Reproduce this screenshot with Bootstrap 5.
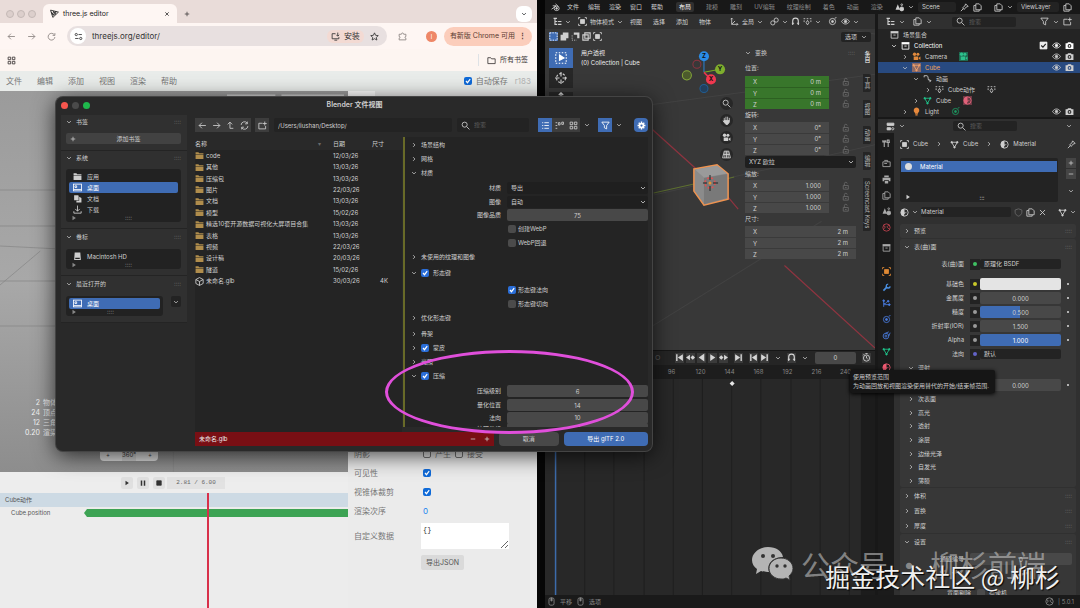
<!DOCTYPE html>
<html lang="zh-CN">
<head>
<meta charset="utf-8">
<meta name="viewport" content="width=device-width, initial-scale=1">
<title>three.js editor / Blender</title>
<link href="https://cdn.jsdelivr.net/npm/bootstrap@5.3.0/dist/css/bootstrap.min.css" rel="stylesheet">
<style>
body{font-family:Inter,"Noto Sans CJK SC",sans-serif;font-size:6px;line-height:10px;background:#060606;color:#cfcfcf}
svg.ic{width:9px;height:9px;fill:none;stroke:currentColor;stroke-width:1.5;flex:none;display:block}
svg.lg{width:12px;height:12px}
svg.sm{width:6px;height:6px;stroke-width:2}
.solid{fill:currentColor}
button,input,select,textarea{font:inherit;color:inherit;border:0;padding:0;margin:0;background:none;min-width:0;border-radius:0}
::placeholder{color:#5c5c5c!important}
a{color:inherit;text-decoration:none}
label{display:inline-block}
.desk{height:100vh;position:relative}
/* browser */
.chrome{flex:0 0 50%;padding-right:3px;color:#3c3838;font-size:8px;line-height:12px}
.strip{height:23px;background:#e9dcd9;padding:4px 5px 0 6px;gap:3px}
.tl{width:8px;height:8px;border-radius:50%;border:1px solid #c4b9b6;background:#dccfcc}
.tabx{background:#fef6f3;height:19px;width:134px;border-radius:6px 6px 0 0;margin-left:4px;padding:0 7px;font-size:7px;color:#222}
.round{width:16px;height:16px;border-radius:6px;background:#fff}
.bar{height:26px;background:#fef6f3;padding:0 5px 0 7px;gap:11px;color:#8a8280}
.omni{background:#e8e0e0;border-radius:10px;height:20px;color:#333;padding:0 8px 0 3px;gap:6px}
.inst{background:#f3dad3;border-radius:6px;height:13px;padding:0 4px}
.upd{background:#fbcdbb;border-radius:10px;height:19px;padding:0 6px;color:#5a3a30;font-size:7px}
.marks{height:22px;background:#fdf5f1;padding:0 9px 0 7px;font-size:7px}
.emenu{height:20px;background:#e9ecea;padding:0 6px;gap:15px;color:#777}
.ck{appearance:none;width:8px;height:8px;border-radius:2px;background:#4b4b4b;flex:none}
.ck:checked{background:#2a6ed8 url("data:image/svg+xml,%3Csvg xmlns='http://www.w3.org/2000/svg' viewBox='0 0 8 8'%3E%3Cpath d='M2 4l1.5 1.7L6.2 2.2' fill='none' stroke='%23fff' stroke-width='1.2'/%3E%3C/svg%3E")}
.ck.line{background:#eee;border:1px solid #777}
.ck.blue:checked{background-color:#0f6ad8}
.scene{flex:1 1 345px;background:linear-gradient(#9b9b9b,#a8a8a8 50%,#8d8d8d)}
.stats{font-size:7px;line-height:10px;color:#f4f4f4;width:80px}
.stats span{width:40px;text-align:right;margin-right:3px}
.play{background:#ededed;height:21px;padding-left:121px;gap:4px;color:#333}
.play button{width:12px;height:12px;background:#e0e0e0;border-radius:2px}
.play .time{background:#e2e2e2;width:58px;height:12px;font:6px/12px "Liberation Mono",monospace;color:#666;text-align:center;margin-left:-2px}
.tracks{background:#ececec;font-size:6px;color:#555;position:relative}
.tracks .clip{height:14px;background:#cddae4;padding:0 5px}
.keys{height:8px;background:#3da354;clip-path:polygon(0 50%,3px 0,100% 0,100% 100%,3px 100%)}
.head{position:absolute;top:0;bottom:0;left:207px;width:2px;background:#d8304a}
.side{flex:0 0 189px;background:#ebebeb;color:#777}
.side .prop{height:19px;padding-left:6px}
.side .prop>.nm{width:69px}
.ta{width:88px;height:26px;background:#fff;font:7px/10px "Liberation Mono",monospace;color:#333;padding:2px;resize:both;vertical-align:top}
.exp{background:#dadada;height:15px;padding:0 5px;border-radius:2px;color:#555;font-size:7px}
/* blender */
.blend{background:#161616;margin-left:5px;min-width:0}
.topm{height:14px;background:#181818;padding-left:6px;overflow:hidden}
.topm a{white-space:nowrap;flex:none}
.dim a{color:#8c8c8c}
.wtab{background:#303030;border-radius:2px;padding:0 3px;color:#fff!important}
.box{background:#232323;border-radius:2px}
.hd{height:15px;background:#303030;white-space:nowrap}
.view{background:#383838;position:relative;flex:0 0 336px;overflow:hidden}
.view .world{position:absolute;inset:0;width:100%;height:100%}
.lay{position:relative}
.view .hd{gap:3px}
.tb{width:24px;height:20px;background:#272727}
.tb.on,.on{background:#3f6cb4!important;color:#fff}
.fld{background:#484848;height:11px;padding:0 8px;gap:4px}
.fld input{width:100%;text-align:right}
.fld+.fld{border-top:1px solid #3a3a3a}
.grn .fld{background:#38762b}.grn .fld+.fld{border-color:#2c6021}
.w84{width:84px}.npan{width:118px;line-height:12px}
.vtab{writing-mode:vertical-rl;background:#252525;color:#b5b5b5;width:8px;border-radius:0 2px 2px 0;padding:3px 0;line-height:8px}
.rnd{width:13px;height:13px;border-radius:50%;background:#272727}
.num{height:12px;background:#484848;text-align:center;border-radius:2px;width:100%}
.sel{appearance:none;height:12px;border-radius:2px;padding:0 4px;width:100%;background:#1f1f1f url("data:image/svg+xml,%3Csvg xmlns='http://www.w3.org/2000/svg' viewBox='0 0 8 8'%3E%3Cpath d='M2 3l2 2 2-2' fill='none' stroke='%23bbb' stroke-width='.9'/%3E%3C/svg%3E") no-repeat right 1px center/8px 8px}
.tlh{height:14px;background:#252525;color:#d5d5d5}
.tlh button{height:10px;background:#3a3a3a}
.ruler{height:14px;background:#1d1d1d;color:#858585;overflow:hidden;padding-left:112px}
.ruler span{width:29px;text-align:center;flex:none}
.dope{background:#282828}
.right{flex:0 0 205px;min-width:0;background:#181818;padding-left:3px}
.outl{height:104px;background:#242424;overflow:hidden}
.outl .it{height:11px;gap:4px;padding-right:6px}
.outl ul,.plain{list-style:none;margin:0;padding:0}
.ptabs{width:16px;background:#1b1b1b;color:#aaa;padding-top:6px;gap:7px}
.props{background:#303030;padding:0 4px 0 6px;overflow:hidden;min-width:0}
.pnl{background:#373737;border-radius:2px;padding:0 4px;margin-bottom:1px}
.r14{height:14px}.r15{height:15px}
.pr{height:14px;gap:6px}
.pr>label,.pr>.lb{width:60px;text-align:right;white-space:nowrap;flex:none}
.sock{width:10px;height:11px;background:#232323;flex:none;margin-right:-6px}
.sock i{width:4px;height:4px;border-radius:50%;background:#9a9a9a}
.dot{width:2px;height:2px;border-radius:50%;background:#ddd;flex:none;margin-right:3px}
.fade2{color:#6a6a6a}
.stat{height:13px;background:#1a1a1a;color:#888;padding:0 6px 0 2px}
/* file dialog */
.dlg{position:absolute;left:56px;top:97px;width:596px;height:354px;background:#292929;border-radius:7px;box-shadow:0 0 0 1px #444,0 4px 22px rgba(0,0,0,.75);overflow:hidden;padding:0 4px 5px 5px}
.ttl{height:16px;font-size:7px;font-weight:600}
.ttl i{width:7px;height:7px;border-radius:50%}
.lside{width:126px;margin-top:2px}
.lp{background:#303030;padding:0 6px 6px 5px;border-bottom:1px solid #242424}
.lp .h{height:14px;gap:4px}
.lst{background:#222;border-radius:3px;padding:2px 3px 0}
.lst a{height:11px;padding-left:4px;gap:5px;border-radius:2px}
.lst .ft{height:7px;padding:0 46px 0 2px;color:#888;line-height:6px}
.grp button{background:#3d3d3d;width:14px;height:14px}
.files{width:100%;height:137px;color:#d2d2d2}
.files td{padding:0;line-height:10px}
.ho{height:14px;gap:4px;padding-left:6px}
.opt .pr>label{width:96px}
.opt .ind{padding-left:103px;gap:2px;height:14px}
.fold{color:#b08d4c}
.ring{position:absolute;left:385px;top:350px;width:249px;height:84px;border:3px solid #e04fdb;border-radius:50%}
.tip{position:absolute;left:850px;top:370px;background:#161616;border-radius:2px;padding:2px 6px 2px 3px;line-height:9px;height:23px;color:#ccc;box-shadow:0 1px 4px #000}
.wm{position:absolute;right:34px;bottom:22px;font:29px/44px "Noto Sans CJK SC",sans-serif;color:rgba(190,190,190,.62);white-space:nowrap}
.wm2{position:absolute;right:20px;bottom:14px;font:25px/36px "Noto Sans CJK SC",sans-serif;color:#efefef;text-shadow:1px 1px 1px #000;white-space:nowrap}
</style>
</head>
<body>
<svg width="0" height="0" class="position-absolute" viewBox="0 0 16 16">
<symbol id="dn" viewBox="0 0 16 16"><path d="M3 5.5l5 5 5-5"/></symbol>
<symbol id="rt" viewBox="0 0 16 16"><path d="M5.500 3l5 5-5 5"/></symbol>
<symbol id="al" viewBox="0 0 16 16"><path d="M14 8H2m5-5L2 8l5 5"/></symbol>
<symbol id="ar" viewBox="0 0 16 16"><path d="M2 8h12M9 3l5 5-5 5"/></symbol>
<symbol id="up" viewBox="0 0 16 16"><path d="M3 6l4-4 4 4M7 2v11h6"/></symbol>
<symbol id="ax" viewBox="0 0 16 16"><path d="M3 2v11h11M3 13l6-6M1 4l2-2 2 2M12 11l2 2-2 2"/></symbol>
<symbol id="ln" viewBox="0 0 16 16"><circle cx="5" cy="10.500" r="3.700"/><circle cx="11" cy="5.500" r="3.700"/></symbol>
<symbol id="rl" viewBox="0 0 16 16"><path d="M13 5a6 6 0 1 0 1 4M14 2v4h-4"/></symbol>
<symbol id="rf" viewBox="0 0 16 16"><path d="M2 7a6 6 0 0 1 11-3M14 9a6 6 0 0 1-11 3M13 1v4H9M3 15v-4h4"/></symbol>
<symbol id="x" viewBox="0 0 16 16"><path d="M3.500 3.500l9 9m0-9l-9 9"/></symbol>
<symbol id="pl" viewBox="0 0 16 16"><path d="M8 2v12M2 8h12"/></symbol>
<symbol id="mn" viewBox="0 0 16 16"><path d="M2 8h12"/></symbol>
<symbol id="se" viewBox="0 0 16 16"><circle cx="6.500" cy="6.500" r="4.500"/><path d="M10 10l5 5"/></symbol>
<symbol id="sl" viewBox="0 0 16 16"><circle cx="4" cy="4.500" r="2"/><path d="M8 4.500h6M2 11.500h6"/><circle cx="12" cy="11.500" r="2"/></symbol>
<symbol id="ins" viewBox="0 0 16 16"><path d="M8 3H2v9h12v-3M6 14.500h5M12 1v6m-2.500-2L12 7.500 14.500 5"/></symbol>
<symbol id="st" viewBox="0 0 16 16"><path d="M8 1.500l2 4.400 4.700.5-3.500 3.200 1 4.700L8 11.900l-4.200 2.400 1-4.700L1.300 6.400 6 5.900z"/></symbol>
<symbol id="pz" viewBox="0 0 16 16"><path d="M2 4h4c0-3 4-3 4 0h4v4c-2-.5-2 3.500 0 3v3H2v-3c2 .5 2-3.500 0-3z"/></symbol>
<symbol id="g4" viewBox="0 0 16 16"><path d="M2 2h4.500v4.500H2zM9.500 2H14v4.500H9.500zM2 9.500h4.500V14H2zM9.500 9.500H14V14H9.500z"/></symbol>
<symbol id="fo" viewBox="0 0 16 16"><path d="M1.500 3h5l1.500 2h6.500v8.500h-13z"/></symbol>
<symbol id="ff" viewBox="0 0 16 16"><path fill="currentColor" stroke="none" d="M1 2h5l1.500 2H15v2H1zM1 7h14v7H1z"/></symbol>
<symbol id="nf" viewBox="0 0 16 16"><path d="M8 4H1.500v10h12V9"/><path d="M12 1v7M8.500 4.500h7"/></symbol>
<symbol id="th" viewBox="0 0 16 16"><path d="M1 2l14 3.500L5 15zM5.500 3.200L10 10M3 8.500l7.500-4M4 10l5-1 2-5M2 5l5 7"/></symbol>
<symbol id="dk" viewBox="0 0 16 16"><rect x="1" y="2" width="14" height="12"/><path d="M1 11.500h14M3.500 5h3v3h-3z"/></symbol>
<symbol id="dc" viewBox="0 0 16 16"><path fill="currentColor" stroke="none" d="M2 2h7l1 1v8H2zM11 5l4 2v8H6v-3h5z"/></symbol>
<symbol id="dl" viewBox="0 0 16 16"><path d="M8 1v10M4 7l4 4 4-4M1.500 11v3.500h13V11"/></symbol>
<symbol id="hd" viewBox="0 0 16 16"><path fill="currentColor" stroke="none" fill-rule="evenodd" d="M3 1h10l1 13H2zM4 10v2.500h8V10z"/></symbol>
<symbol id="mo" viewBox="0 0 16 16"><rect x="3.500" y="1.500" width="9" height="13" rx="3"/><path fill="currentColor" d="M7 2h2v5H7z"/></symbol>
<symbol id="cu" viewBox="0 0 16 16"><path d="M8 1l6.500 3.500v7L8 15l-6.500-3.500v-7zM1.500 4.500L8 8l6.500-3.500M8 8v7"/></symbol>
<symbol id="li" viewBox="0 0 16 16"><path d="M2 3h2M6 3h8M2 8h2M6 8h8M2 13h2M6 13h8"/></symbol>
<symbol id="fi" viewBox="0 0 16 16"><path d="M1.500 2h13L10 8v6l-4-2V8z"/></symbol>
<symbol id="ge" viewBox="0 0 16 16"><circle cx="8" cy="8" r="3.500" stroke-width="3"/><path d="M8 1v3M8 12v3M1 8h3M12 8h3M3 3l2 2M11 11l2 2M13 3l-2 2M5 11l-2 2" stroke-width="2.500"/></symbol>
<symbol id="ey" viewBox="0 0 16 16"><path d="M1 8c3.500-6 10.500-6 14 0-3.500 6-10.500 6-14 0z"/><circle cx="8" cy="8" r="2.200" fill="currentColor"/></symbol>
<symbol id="ca" viewBox="0 0 16 16"><path fill="currentColor" fill-rule="evenodd" stroke="none" d="M1 4h3l1.500-2h5L12 4h3v10H1zM8 5.500a3.300 3.300 0 1 0 0 6.600 3.300 3.300 0 0 0 0-6.600zM8 7.300a1.500 1.500 0 1 1 0 3 1.500 1.500 0 0 1 0-3z"/></symbol>
<symbol id="co2" viewBox="0 0 16 16"><path d="M1.500 5h13v8.500h-13zM4 2.500h6V5M4 8h5"/></symbol>
<symbol id="mv" viewBox="0 0 16 16"><g fill="currentColor" stroke="none"><circle cx="4.500" cy="4" r="3"/><circle cx="10.500" cy="4" r="2.700"/><path d="M3 8h8v6H3zM12 10l3-2v6l-3-2z"/></g></symbol>
<symbol id="tr" viewBox="0 0 16 16"><path d="M3 4h10L8 13z"/><g fill="currentColor"><circle cx="3" cy="4" r="1.300"/><circle cx="13" cy="4" r="1.300"/><circle cx="8" cy="13" r="1.300"/></g></symbol>
<symbol id="ac" viewBox="0 0 16 16"><path d="M2 3h5c4 0 0 9 5 9h2M11.500 9.500L14 12l-2.500 2.500M2 3v3"/></symbol>
<symbol id="kf" viewBox="0 0 16 16"><path d="M1 3h3M6.500 3h3M12 3h3M2 6v3M14 6v3M8 6l2.500 4L8 14l-2.500-4z"/></symbol>
<symbol id="bu" viewBox="0 0 16 16"><path fill="currentColor" stroke="none" d="M8 1a5 5 0 0 1 3 9l-.5 2h-5L5 10a5 5 0 0 1 3-9zM6 13h4v2H6z"/></symbol>
<symbol id="ob" viewBox="0 0 16 16"><path d="M1 4V1h3M12 1h3v3M15 12v3h-3M4 15H1v-3"/><path fill="currentColor" d="M4.500 4.500h7v7h-7z"/></symbol>
<symbol id="ma" viewBox="0 0 16 16"><circle cx="8" cy="8" r="6.500"/><path fill="currentColor" stroke="none" d="M8 1.500a6.500 6.500 0 0 0 0 13c-2-4 1-5.500 5-6.500V8H8z"/></symbol>
<symbol id="co" viewBox="0 0 16 16"><path d="M5 1.500h6l3.500 3.500v7H5zM5 4.500H1.500v10H11V12"/></symbol>
<symbol id="pi" viewBox="0 0 16 16"><path d="M10 1.500l4.500 4.500-4 1.500-3 4-3-3 4-3zM6 10l-4.500 4.500"/></symbol>
<symbol id="ar2" viewBox="0 0 16 16"><path fill="currentColor" stroke="none" d="M1 2h14v4H1z"/><path d="M2 6v8.500h12V6M6 9h4"/></symbol>
<symbol id="lk" viewBox="0 0 16 16"><path d="M4 8h9v6.500H4zM6 8V4.500c0-3 5-3 5 0M7 11.500h3"/></symbol>
<symbol id="tw" viewBox="0 0 16 16"><path d="M4 2v12M1.500 2v3h5V2M11 14V6M9.500 2h3l.5 4h-4z" stroke-width="2"/></symbol>
<symbol id="sc" viewBox="0 0 16 16"><path fill="currentColor" stroke="none" d="M5 2l4 10H1z"/><circle cx="12" cy="10.500" r="3.500" fill="currentColor"/><circle cx="12" cy="3" r="1.500"/></symbol>
<symbol id="pn" viewBox="0 0 16 16"><path fill="currentColor" stroke="none" d="M4 1h8v3H4zM1 5h14v6h-3V9H4v2H1zM5 10h6v5H5z"/></symbol>
<symbol id="wr" viewBox="0 0 16 16"><path stroke-width="3" d="M2.500 13.500L9 7"/><path stroke-width="2.500" d="M11 2a3.500 3.500 0 1 0 3.500 4"/></symbol>
<symbol id="ph" viewBox="0 0 16 16"><circle cx="8" cy="8" r="5.500"/><circle cx="8" cy="8" r="1.800" fill="currentColor"/><path d="M12 2l3-1"/></symbol>
<symbol id="pt" viewBox="0 0 16 16"><path d="M3 14V3M3 8c4 0 4 0 7-4M3 10h10"/><g fill="currentColor"><circle cx="3" cy="3" r="1.500"/><circle cx="11" cy="4" r="1.500"/><circle cx="13" cy="10" r="1.500"/></g></symbol>
<symbol id="cn" viewBox="0 0 16 16"><circle cx="7" cy="9" r="5"/><circle cx="7" cy="9" r="1.800"/><path d="M6 4l6-2.500M12 9l2.500-6"/></symbol>
<symbol id="wo" viewBox="0 0 16 16"><circle cx="8" cy="8" r="6.500"/><path d="M3 4c3 2 3 4 1 6M13 4c-3 1-6 3-2 5l2 2"/></symbol>
<symbol id="he" viewBox="0 0 16 16"><path d="M8 1.500l6 2v4c0 3.500-3 6-6 7-3-1-6-3.500-6-7v-4z"/></symbol>
<symbol id="bl" viewBox="0 0 16 16"><path d="M1 11L9 5H3M8 1.500l5 4.500"/><ellipse cx="10" cy="9.500" rx="4.500" ry="4"/><circle cx="10" cy="9.500" r="1.500" fill="currentColor"/></symbol>
<symbol id="tre" viewBox="0 0 16 16"><path d="M1 2.500h6M3.500 3v10h4M3.500 8h4M9 8h6M9 13h6" stroke-width="2"/></symbol>
<symbol id="pe" viewBox="0 0 16 16"><path fill="currentColor" d="M2 2h12v4H2zM2 10h6v4H2z"/><circle cx="12" cy="12" r="2"/></symbol>
<symbol id="mg" viewBox="0 0 16 16"><path d="M3 14V7a5 5 0 0 1 10 0v7M1.500 11h4M10.500 11h4" stroke-width="2"/></symbol>
<symbol id="sq" viewBox="0 0 16 16"><path fill="currentColor" stroke="none" d="M1 5h4V1h10v10h-4v4H1z"/></symbol>
<symbol id="sq2" viewBox="0 0 16 16"><path fill="currentColor" stroke="none" d="M5 1h10v10h-4V5H5z"/><path stroke-dasharray="2 2" d="M2 6v8.500h8"/></symbol>
<symbol id="sq3" viewBox="0 0 16 16"><path d="M5 1.500h9.500V11H5zM1.500 5H11v9.500H1.500z" stroke-width="2"/></symbol>
<symbol id="da" viewBox="0 0 16 16"><rect x="1.500" y="1.500" width="13" height="13" stroke-dasharray="2.500 2"/></symbol>
<symbol id="pp" viewBox="0 0 16 16"><path fill="currentColor" stroke="none" d="M4 2l9 6-9 6z"/></symbol>
<symbol id="pb" viewBox="0 0 16 16"><path fill="currentColor" stroke="none" d="M13 1L3 8l10 7z"/></symbol>
<symbol id="js" viewBox="0 0 16 16"><path fill="currentColor" stroke="none" d="M2 2h2.500v12H2zM14 2L5 8l9 6z"/></symbol>
<symbol id="je" viewBox="0 0 16 16"><path fill="currentColor" stroke="none" d="M14 2h-2.500v12H14zM2 2l9 6-9 6z"/></symbol>
<symbol id="kp" viewBox="0 0 16 16"><path fill="currentColor" stroke="none" d="M7 3L0 8l7 5zM12 4l4 4-4 4-4-4z"/></symbol>
<symbol id="kn" viewBox="0 0 16 16"><path fill="currentColor" stroke="none" d="M9 3l7 5-7 5zM4 4l4 4-4 4-4-4z"/></symbol>
<symbol id="ck" viewBox="0 0 16 16"><circle cx="8" cy="9" r="5.500"/><path d="M8 5.500V9l2 1.500M6 1h4M2 4l2-2"/></symbol>
</svg>

<main class="desk d-flex overflow-hidden">
<!-- Browser window -->
<section class="chrome d-flex flex-column">
  <div class="strip d-flex align-items-center">
    <span class="tl"></span><span class="tl"></span><span class="tl"></span>
    <div class="tabx d-flex align-items-center gap-1"><svg class="ic"><use href="#th"/></svg><span>three.js editor</span><svg class="ic sm ms-auto"><use href="#x"/></svg></div>
    <button class="ms-1" aria-label="新标签页"><svg class="ic sm"><use href="#pl"/></svg></button>
    <button class="round ms-auto d-flex align-items-center justify-content-center text-dark" aria-label="搜索标签页"><svg class="ic sm"><use href="#dn"/></svg></button>
  </div>
  <div class="bar d-flex align-items-center">
    <svg class="ic"><use href="#al"/></svg><svg class="ic"><use href="#ar"/></svg><svg class="ic"><use href="#rl"/></svg>
    <div class="omni d-flex align-items-center flex-grow-1"><span class="round rounded-circle d-flex align-items-center justify-content-center"><svg class="ic"><use href="#sl"/></svg></span><input class="flex-grow-1" value="threejs.org/editor/" aria-label="地址栏">
      <button class="inst d-flex align-items-center gap-1"><svg class="ic"><use href="#ins"/></svg>安装</button><svg class="ic"><use href="#st"/></svg></div>
    <svg class="ic"><use href="#pz"/></svg>
    <span class="rounded-circle text-white text-center ms-2" style="width:11px;height:11px;background:#ee8767;font-size:6px">l</span>
    <button class="upd d-flex align-items-center gap-1 text-nowrap" style="margin-left:-4px">有新版 Chrome 可用 <b>⋮</b></button>
  </div>
  <div class="marks d-flex align-items-center"><svg class="ic"><use href="#g4"/></svg><span class="ms-auto border-start ps-2 d-flex align-items-center gap-1"><svg class="ic"><use href="#fo"/></svg>所有书签</span></div>
  <nav class="emenu d-flex align-items-center"><a href="#">文件</a><a href="#">编辑</a><a href="#">添加</a><a href="#">视图</a><a href="#">渲染</a><a href="#">帮助</a>
    <label class="ms-auto d-flex align-items-center gap-1"><input type="checkbox" class="ck blue" checked>自动保存</label><span style="margin-left:-8px;color:#b5b5b5">r183</span></nav>
  <div class="d-flex flex-grow-1">
    <div class="d-flex flex-column flex-grow-1">
      <div class="scene d-flex flex-column justify-content-end overflow-hidden position-relative">
        <svg class="position-absolute top-0 start-0 w-100 h-100" preserveAspectRatio="none" viewBox="0 0 345 381" fill="none" stroke="#858585" stroke-width=".7"><path d="M0 99H56M0 135H56M0 155L60 158M0 194l40-34M0 190H60M0 235H60M172 340v41"/><path stroke="#cfcfcf" stroke-width="5" d="M225 6h48M279 6h62"/></svg>
        <div class="stats lay"><div class="d-flex"><span>2</span>物体</div><div class="d-flex"><span>24</span>顶点</div><div class="d-flex"><span>12</span>三角形</div><div class="d-flex"><span>0.20</span>渲染</div></div>
        <div class="lay rounded-1 d-flex justify-content-around align-items-end" style="background:#ddd;width:58px;height:20px;margin:3px 0 11px 100px;font-size:6px"><span>+</span><span style="background:#ccc">360°</span><span>+</span></div>
      </div>
      <div class="play d-flex align-items-center"><button class="d-flex align-items-center justify-content-center" aria-label="播放"><svg class="ic sm"><use href="#pp"/></svg></button><button class="d-flex align-items-center justify-content-center" aria-label="暂停"><svg class="ic sm" viewBox="0 0 16 16"><path stroke-width="4" d="M4 1v14M12 1v14"/></svg></button><button class="d-flex align-items-center justify-content-center" aria-label="停止"><svg class="ic sm" viewBox="0 0 16 16"><path class="solid" d="M2 2h12v12H2z"/></svg></button><span class="time">2.81 / 6.00</span></div>
      <div class="tracks" style="height:115px"><div class="clip d-flex align-items-center">Cube动作</div><div class="d-flex align-items-center" style="height:12px;padding-left:11px"><span style="width:73px">Cube.position</span><div class="keys flex-grow-1"></div></div><div class="head"></div></div>
    </div>
    <aside class="side d-flex flex-column">
      <div style="height:16px;width:27px;background:#fff"></div>
      <div class="mt-auto" style="padding-bottom:38px">
        <div class="prop d-flex align-items-center"><span class="nm">阴影</span><label class="d-flex align-items-center gap-1"><input type="checkbox" class="ck line">产生</label><label class="d-flex align-items-center gap-1 ms-1"><input type="checkbox" class="ck line">接受</label></div>
        <div class="prop d-flex align-items-center"><label class="nm" for="vis">可见性</label><input id="vis" type="checkbox" class="ck blue" checked></div>
        <div class="prop d-flex align-items-center"><label class="nm" for="fru">视锥体裁剪</label><input id="fru" type="checkbox" class="ck blue" checked></div>
        <div class="prop d-flex align-items-center"><label class="nm" for="ord">渲染次序</label><input id="ord" value="0" style="color:#1b84f0;width:40px"></div>
        <div class="prop d-flex align-items-center" style="height:32px"><label class="nm" for="ud" style="width:67px">自定义数据</label><textarea id="ud" class="ta">{}</textarea></div>
        <div class="d-flex" style="padding:3px 0 0 73px"><button class="exp">导出JSON</button></div>
      </div>
    </aside>
  </div>
</section>

<!-- Blender main window -->
<section class="blend flex-grow-1 d-flex flex-column overflow-hidden">
  <div class="d-flex">
    <nav class="topm d-flex align-items-center flex-grow-1" style="flex-basis:0;gap:9px"><svg class="ic" style="margin-right:-2px"><use href="#bl"/></svg><a href="#">文件</a><a href="#">编辑</a><a href="#">渲染</a><a href="#">窗口</a><a href="#">帮助</a>
      <span class="dim d-flex align-items-center ms-1" style="gap:12px"><a href="#" class="wtab">布局</a><a href="#">建模</a><a href="#">雕刻</a><a href="#">UV编辑</a><a href="#">纹理绘制</a><a href="#">着色</a><a href="#">动画</a><a href="#">渲染</a></span></nav>
    <div class="topm d-flex align-items-center gap-1 p-0" style="width:185px"><svg class="ic"><use href="#sc"/></svg><svg class="ic sm"><use href="#dn"/></svg><input class="box px-1" style="width:38px" value="Scene" aria-label="场景"><svg class="ic"><use href="#pi"/></svg><svg class="ic"><use href="#co"/></svg><svg class="ic ms-2"><use href="#co"/></svg><svg class="ic sm"><use href="#dn"/></svg><input class="box px-1" style="width:42px" value="ViewLayer" aria-label="视图层"><svg class="ic"><use href="#co"/></svg></div>
  </div>
  <div class="d-flex flex-grow-1 overflow-hidden">
    <div class="flex-grow-1 d-flex flex-column" style="min-width:0">
      <!-- 3D viewport -->
      <div class="view d-flex flex-column">
        <svg class="world" viewBox="0 0 328 336" preserveAspectRatio="xMinYMin slice" fill="none">
          <path stroke="#424242" d="M107 310L275 206M108 180L328 130M107 90L328 60M200 0L328 20"/><path stroke="#8f3440" d="M107 115L157 160M182 182L192 194M238 250L328 332" stroke-width="1.200"/><path stroke="#5e7031" d="M108 178L148 169M180 164L188 162"/>
          <g stroke="#ef9350" stroke-width="1.500"><path fill="#8b8b8b" d="M148 154l23-4 11 9v25l-24 6-10-14z"/></g><path fill="#9a9a9a" d="M149 154.500l22-4 10 8-23 4z"/><path fill="#797979" d="M158 163l23-4v24l-23 6z"/>
          <circle cx="164" cy="168" r="5" stroke="#e05050" stroke-width="1.500" stroke-dasharray="2 2"/><path stroke="#222" d="M157 168h4M167 168h5M164 160v5M164 171v5"/><circle cx="164" cy="168" r="1.500" fill="#f09030"/>
          <path stroke="#2a82d6" d="M158 42v16"/><path stroke="#7bab24" d="M158 58l16-3"/><path stroke="#e8354f" stroke-width="1.500" d="M158 58l7 7"/>
          <circle cx="158" cy="42" r="5" fill="#2a8be6"/><circle cx="174" cy="55" r="5" fill="#7fae2d"/><circle cx="165" cy="65" r="5" fill="#f0384f"/><circle cx="151" cy="50" r="4" stroke="#8c3440"/><circle cx="141" cy="61" r="4.500" stroke="#86a83a" fill="#4c5b2c"/><circle cx="158" cy="74" r="4" stroke="#225d92" fill="#22405d"/>
          <g fill="#111" font-size="6" font-weight="700" text-anchor="middle"><text x="158" y="44">Z</text><text x="174" y="57">Y</text><text x="165" y="67">X</text></g>
        </svg>
        <div class="hd lay d-flex align-items-center ps-2"><svg class="ic"><use href="#tre"/></svg><svg class="ic sm"><use href="#dn"/></svg><svg class="ic ms-1"><use href="#ob"/></svg><span>物体模式</span><svg class="ic sm"><use href="#dn"/></svg>
          <a class="mx-1" href="#">视图</a><a class="mx-1" href="#">选择</a><a class="mx-1" href="#">添加</a><a class="ms-1" href="#">物体</a><svg class="ic ms-3"><use href="#ax"/></svg>全局<svg class="ic sm"><use href="#dn"/></svg><svg class="ic ms-1"><use href="#ln"/></svg><svg class="ic sm"><use href="#dn"/></svg><svg class="ic"><use href="#mg"/></svg><svg class="ic"><use href="#kf"/></svg><svg class="ic sm"><use href="#dn"/></svg><svg class="ic ms-1"><use href="#ph"/></svg><svg class="ic ms-auto"><use href="#ey"/></svg><svg class="ic sm me-3"><use href="#dn"/></svg></div>
        <div class="lay d-flex align-items-center ps-1" style="height:15px;gap:2px"><svg class="ic on"><use href="#da"/></svg><svg class="ic"><use href="#sq"/></svg><svg class="ic"><use href="#sq2"/></svg><svg class="ic"><use href="#sq3"/></svg><svg class="ic"><use href="#ob"/></svg><span class="box ms-auto px-1 me-1 d-flex align-items-center gap-1">选项 <svg class="ic sm"><use href="#dn"/></svg></span></div>
        <div class="lay d-flex flex-grow-1">
          <div class="pt-1 ps-1"><button class="tb on d-flex align-items-center justify-content-center" aria-label="框选"><svg class="ic lg" viewBox="0 0 16 16"><rect x="1" y="1" width="14" height="14" stroke-dasharray="2"/><path class="solid" d="M6 4l6 4-6 3z"/></svg></button><button class="tb d-flex align-items-center justify-content-center" aria-label="游标"><svg class="ic lg" viewBox="0 0 16 16"><circle cx="8" cy="8" r="6" stroke-dasharray="3 2"/><path d="M8 0v6M8 10v6M0 8h6M10 8h6"/></svg></button><button class="tb mt-1 d-flex justify-content-center" aria-label="移动"><svg class="ic lg" viewBox="0 0 16 16"><path d="M8 1v14M1 8h14M5 4l3-3 3 3"/></svg></button></div>
          <div class="ps-2 pt-1 flex-grow-1" style="color:#eee">用户透视<br>(0) Collection | Cube</div>
          <div class="d-flex flex-column gap-1 me-2 pe-1" style="padding-top:53px"><span class="rnd d-flex align-items-center justify-content-center"><svg class="ic"><use href="#se"/></svg></span><span class="rnd d-flex align-items-center justify-content-center"><svg class="ic" viewBox="0 0 16 16"><path class="solid" stroke-linecap="round" d="M4 8V4M7 7V2M10 7V2M13 8V4M4 8h9v3l-3 4H7L2 9"/></svg></span><span class="rnd d-flex align-items-center justify-content-center"><svg class="ic"><use href="#mv"/></svg></span><span class="rnd d-flex align-items-center justify-content-center"><svg class="ic" viewBox="0 0 16 16"><path d="M4 2h8l3 12H1zM2.500 8h11M8 2v12M5.500 2L5 14M10.500 2l.5 12"/></svg></span></div>
          <div class="npan">
            <div class="d-flex align-items-center gap-1 pe-2" style="height:18px"><svg class="ic sm"><use href="#dn"/></svg>变换<span class="ms-auto fade2">::::</span></div>
            <div class="r14">位置:</div>
            <div class="d-flex"><div class="grn w84"><label class="fld d-flex">X<input value="0 m"></label><label class="fld d-flex">Y<input value="0 m"></label><label class="fld d-flex">Z<input value="0 m"></label></div><div class="ms-2 ps-1 d-flex flex-column justify-content-around fade2"><svg class="ic"><use href="#lk"/></svg><svg class="ic"><use href="#lk"/></svg><svg class="ic"><use href="#lk"/></svg></div></div>
            <div style="height:13px">旋转:</div>
            <div class="d-flex"><div class="w84"><label class="fld d-flex">X<input value="0°"></label><label class="fld d-flex">Y<input value="0°"></label><label class="fld d-flex">Z<input value="0°"></label></div><div class="ms-2 ps-1 d-flex flex-column justify-content-around fade2"><svg class="ic"><use href="#lk"/></svg><svg class="ic"><use href="#lk"/></svg><svg class="ic"><use href="#lk"/></svg></div></div>
            <select class="sel d-block" style="width:111px;margin-top:1px" aria-label="旋转模式"><option>XYZ 欧拉</option></select>
            <div style="height:12px">缩放:</div>
            <div class="d-flex"><div class="w84"><label class="fld d-flex">X<input value="1.000"></label><label class="fld d-flex">Y<input value="1.000"></label><label class="fld d-flex">Z<input value="1.000"></label></div><div class="ms-2 ps-1 d-flex flex-column justify-content-around fade2"><svg class="ic"><use href="#lk"/></svg><svg class="ic"><use href="#lk"/></svg><svg class="ic"><use href="#lk"/></svg></div></div>
            <div style="height:13px">尺寸:</div>
            <div style="width:111px"><label class="fld d-flex">X<input value="2 m"></label><label class="fld d-flex">Y<input value="2 m"></label><label class="fld d-flex">Z<input value="2 m"></label></div>
          </div>
          <div class="d-flex flex-column gap-2 pe-1 pt-1"><span class="vtab" style="background:#383838;color:#fff">条目</span><span class="vtab">工具</span><span class="vtab">视图</span><span class="vtab">动画</span><span class="vtab">编辑</span><span class="vtab">Screencast Keys</span></div>
        </div>
      </div>
      <!-- Timeline -->
      <div class="tlh d-flex align-items-center" style="margin-top:1px;padding-left:110px;gap:2px"><span class="fade2" style="width:18px">○</span><button aria-label="起点"><svg class="ic"><use href="#js"/></svg></button><button aria-label="上一关键帧"><svg class="ic"><use href="#kp"/></svg></button><button aria-label="倒放"><svg class="ic"><use href="#pb"/></svg></button><button aria-label="播放"><svg class="ic"><use href="#pp"/></svg></button><button aria-label="下一关键帧"><svg class="ic"><use href="#kn"/></svg></button><button class="ms-1" aria-label="终点"><svg class="ic"><use href="#je"/></svg></button><button class="ms-1" aria-label="后退"><svg class="ic"><use href="#js"/></svg></button><button aria-label="前进"><svg class="ic"><use href="#je"/></svg></button><svg class="ic sm ms-1"><use href="#dn"/></svg><button class="ms-1" aria-label="吸附"><svg class="ic"><use href="#mg"/></svg></button><svg class="ic sm ms-1"><use href="#dn"/></svg><input class="num ms-auto" style="width:41px" value="0" aria-label="当前帧"><button class="ms-1 me-1" aria-label="使用预览范围"><svg class="ic"><use href="#ck"/></svg></button></div>
      <div class="ruler d-flex align-items-center"><span>96</span><span>120</span><span>144</span><span>168</span><span>192</span><span>216</span><span>240</span></div>
      <div class="dope flex-grow-1 overflow-hidden"><svg class="w-100 h-100" viewBox="0 0 328 216" preserveAspectRatio="xMinYMin slice"><path fill="#1c1c1c" d="M314 0h30v220h-30z"/><path stroke="#1f1f1f" d="M39.500 0v220M68.500 0v220M98.500 0v220M127.500 0v220M156.500 0v220M185.500 0v220M214.500 0v220M244.500 0v220M273.500 0v220M302.500 0v220"/><path stroke="#3c6bab" stroke-width="1.500" d="M10.500 0v220"/><path fill="#e6e6e6" d="M186 2l2.500 2.500L186 7l-2.500-2.500z"/></svg></div>
    </div>
    <!-- Outliner and properties -->
    <div class="right d-flex flex-column">
      <div class="outl">
        <div class="hd d-flex align-items-center px-2 gap-1"><svg class="ic"><use href="#tre"/></svg><svg class="ic sm"><use href="#dn"/></svg><svg class="ic ms-1"><use href="#co"/></svg><svg class="ic sm"><use href="#dn"/></svg><span class="box ms-3 px-1 d-flex align-items-center gap-1" style="width:64px"><svg class="ic"><use href="#se"/></svg><input class="w-100" placeholder="搜索" aria-label="搜索大纲"></span><svg class="ic ms-auto"><use href="#fi"/></svg><svg class="ic sm"><use href="#dn"/></svg><svg class="ic"><use href="#nf"/></svg></div>
        <ul>
          <li class="it d-flex align-items-center" style="padding-left:12px"><svg class="ic"><use href="#ar2"/></svg>场景集合</li>
          <li class="it d-flex align-items-center text-white" style="padding-left:13px"><svg class="ic sm"><use href="#dn"/></svg><svg class="ic"><use href="#ar2"/></svg>Collection<svg class="ic ms-auto" viewBox="0 0 16 16"><path fill="#eee" d="M2 2h12v12H2z"/><path stroke="#222" stroke-width="2" d="M4 8l3 3 5-6"/></svg><svg class="ic"><use href="#ey"/></svg><svg class="ic"><use href="#ca"/></svg></li>
          <li class="it d-flex align-items-center" style="padding-left:24px"><svg class="ic sm"><use href="#rt"/></svg><svg class="ic" style="color:#e0893c"><use href="#mv"/></svg>Camera<svg class="ic ms-2" style="color:#2dc18c;background:#1f6a51"><use href="#mv"/></svg><svg class="ic ms-auto"><use href="#ey"/></svg><svg class="ic"><use href="#ca"/></svg></li>
          <li class="it d-flex align-items-center" style="padding-left:24px;background:#284a80"><svg class="ic sm"><use href="#dn"/></svg><svg class="ic" style="color:#f0a06c;background:#8b6a66"><use href="#tr"/></svg><span style="color:#f0a35a">Cube</span><svg class="ic ms-auto"><use href="#ey"/></svg><svg class="ic"><use href="#ca"/></svg></li>
          <li class="it d-flex align-items-center" style="padding-left:35px"><svg class="ic sm"><use href="#dn"/></svg><svg class="ic"><use href="#ac"/></svg>动画</li>
          <li class="it d-flex align-items-center" style="padding-left:47px"><svg class="ic sm"><use href="#rt"/></svg><svg class="ic"><use href="#kf"/></svg>Cube动作<svg class="ic ms-2"><use href="#kf"/></svg></li>
          <li class="it d-flex align-items-center" style="padding-left:35px"><svg class="ic sm"><use href="#rt"/></svg><svg class="ic" style="color:#1fc48b"><use href="#tr"/></svg>Cube<svg class="ic ms-2" style="color:#e0627a;background:#6c3a44"><use href="#ma"/></svg></li>
          <li class="it d-flex align-items-center" style="padding-left:24px"><svg class="ic sm"><use href="#rt"/></svg><svg class="ic" style="color:#e8893c"><use href="#bu"/></svg>Light<svg class="ic ms-2" style="color:#1d9a63"><use href="#ph"/></svg><svg class="ic ms-auto"><use href="#ey"/></svg><svg class="ic"><use href="#ca"/></svg></li>
        </ul>
      </div>
      <div class="d-flex flex-column flex-grow-1 overflow-hidden" style="margin-top:2px">
        <div class="hd d-flex align-items-center px-2 gap-1"><svg class="ic"><use href="#pe"/></svg><svg class="ic sm"><use href="#dn"/></svg><span class="box px-1 d-flex align-items-center gap-1" style="width:64px;margin-left:44px"><svg class="ic"><use href="#se"/></svg><input class="w-100" placeholder="搜索" aria-label="搜索属性"></span><svg class="ic sm ms-auto"><use href="#dn"/></svg></div>
        <div class="d-flex flex-grow-1 overflow-hidden">
          <div class="ptabs d-flex flex-column align-items-center flex-shrink-0"><svg class="ic mb-1"><use href="#tw"/></svg><svg class="ic"><use href="#co2"/></svg><svg class="ic"><use href="#pn"/></svg><svg class="ic"><use href="#co"/></svg><svg class="ic"><use href="#sc"/></svg><svg class="ic" style="color:#c2424f"><use href="#wo"/></svg><svg class="ic my-1"><use href="#ar2"/></svg><svg class="ic mt-1" style="color:#e08a35"><use href="#ob"/></svg><svg class="ic" style="color:#4a8fe0"><use href="#wr"/></svg><svg class="ic" style="color:#4a7ce0"><use href="#pt"/></svg><svg class="ic" style="color:#4a7ce0"><use href="#ph"/></svg><svg class="ic" style="color:#4a7ce0"><use href="#cn"/></svg><svg class="ic" style="color:#1fc48b"><use href="#tr"/></svg><svg class="ic" style="color:#ef5a72"><use href="#ma"/></svg></div>
          <div class="props flex-grow-1">
            <div class="d-flex align-items-center gap-1" style="height:22px"><svg class="ic"><use href="#ob"/></svg>Cube<svg class="ic sm mx-1"><use href="#rt"/></svg><svg class="ic"><use href="#tr"/></svg>Cube<svg class="ic sm mx-1"><use href="#rt"/></svg><svg class="ic"><use href="#ma"/></svg>Material<svg class="ic ms-auto"><use href="#pi"/></svg></div>
            <div class="d-flex gap-2" style="margin-top:3px"><div class="box flex-grow-1 d-flex flex-column justify-content-between" style="height:44px;padding:3px 1px 0"><a href="#" class="on d-flex align-items-center gap-2 ps-1" style="height:11px"><span class="rounded-circle" style="width:7px;height:7px;background:#ddd"></span>Material</a><div class="d-flex px-1" style="line-height:8px"><svg class="ic sm"><use href="#pp"/></svg><span class="mx-auto">:::</span></div></div>
              <div class="d-flex flex-column align-items-center" style="gap:1px"><button style="background:#454545;padding:2px" aria-label="添加"><svg class="ic sm"><use href="#pl"/></svg></button><button style="background:#454545;padding:2px" aria-label="移除"><svg class="ic sm"><use href="#mn"/></svg></button><svg class="ic sm mt-2"><use href="#dn"/></svg></div></div>
            <div class="d-flex align-items-center" style="height:14px;margin:3px 0 5px;gap:3px"><svg class="ic"><use href="#ma"/></svg><svg class="ic sm"><use href="#dn"/></svg><div class="box flex-grow-1 d-flex align-items-center" style="width:0"><input class="w-100" value="Material" aria-label="材质名称"></div><svg class="ic fade2"><use href="#he"/></svg><svg class="ic"><use href="#co"/></svg><svg class="ic"><use href="#x"/></svg><svg class="ic ms-2"><use href="#tr"/></svg><svg class="ic sm"><use href="#dn"/></svg></div>
            <div class="pnl"><div class="r14 d-flex align-items-center gap-1"><svg class="ic sm"><use href="#rt"/></svg>预览<span class="ms-auto fade2">::::</span></div></div>
            <div class="pnl">
              <div class="r15 d-flex align-items-center gap-1"><svg class="ic sm"><use href="#dn"/></svg>表(曲)面<span class="ms-auto fade2">::::</span></div>
              <div class="pr d-flex align-items-center" style="margin:3px 0 6px"><span class="lb">表(曲)面</span><span class="sock d-flex align-items-center justify-content-center"><i style="background:#3fc163"></i></span><button class="box flex-grow-1 text-start px-1">原理化 BSDF</button><span class="dot invisible"></span></div>
              <div class="pr d-flex align-items-center"><span class="lb">基础色</span><span class="sock d-flex align-items-center justify-content-center"><i style="background:#c7c729"></i></span><button class="num flex-grow-1" style="background:#e4e4e4;width:0" aria-label="基础色"></button><span class="dot"></span></div>
              <div class="pr d-flex align-items-center"><label for="me">金属度</label><span class="sock d-flex align-items-center justify-content-center"><i></i></span><input id="me" class="num" value="0.000"><span class="dot"></span></div>
              <div class="pr d-flex align-items-center"><label for="ro">糙度</label><span class="sock d-flex align-items-center justify-content-center"><i></i></span><input id="ro" class="num" value="0.500" style="background:linear-gradient(90deg,#3f6cb4 50%,#484848 50%)"><span class="dot"></span></div>
              <div class="pr d-flex align-items-center"><label for="io">折射率(IOR)</label><span class="sock d-flex align-items-center justify-content-center"><i></i></span><input id="io" class="num" value="1.500"><span class="dot"></span></div>
              <div class="pr d-flex align-items-center"><label for="al2">Alpha</label><span class="sock d-flex align-items-center justify-content-center"><i></i></span><input id="al2" class="num on" value="1.000"><span class="dot"></span></div>
              <div class="pr d-flex align-items-center"><span class="lb">法向</span><span class="sock d-flex align-items-center justify-content-center"><i style="background:#6363c7"></i></span><button class="box flex-grow-1 text-start px-1">默认</button><span class="dot invisible"></span></div>
              <div class="r14 d-flex align-items-center gap-1 ps-1"><svg class="ic sm"><use href="#dn"/></svg>漫射</div>
              <div class="pr d-flex align-items-center" style="margin-top:3px"><span class="lb"></span><span class="sock"></span><input class="num" value="0.000" aria-label="漫射糙度"><span class="dot"></span></div>
              <ul class="plain d-flex flex-column ps-1" style="height:95px">
                <li class="flex-fill d-flex align-items-center gap-1"><svg class="ic sm"><use href="#rt"/></svg>次表面</li><li class="flex-fill d-flex align-items-center gap-1"><svg class="ic sm"><use href="#rt"/></svg>高光</li><li class="flex-fill d-flex align-items-center gap-1"><svg class="ic sm"><use href="#rt"/></svg>透射</li><li class="flex-fill d-flex align-items-center gap-1"><svg class="ic sm"><use href="#rt"/></svg>涂层</li><li class="flex-fill d-flex align-items-center gap-1"><svg class="ic sm"><use href="#rt"/></svg>边缘光泽</li><li class="flex-fill d-flex align-items-center gap-1"><svg class="ic sm"><use href="#rt"/></svg>自发光</li><li class="flex-fill d-flex align-items-center gap-1"><svg class="ic sm"><use href="#rt"/></svg>薄膜</li></ul>
            </div>
            <div class="pnl"><div class="r15 d-flex align-items-center gap-1"><svg class="ic sm"><use href="#rt"/></svg>体积<span class="ms-auto fade2">::::</span></div><div class="r15 d-flex align-items-center gap-1"><svg class="ic sm"><use href="#rt"/></svg>置换<span class="ms-auto fade2">::::</span></div><div class="r15 d-flex align-items-center gap-1"><svg class="ic sm"><use href="#rt"/></svg>厚度<span class="ms-auto fade2">::::</span></div></div>
            <div class="pnl"><div class="r15 d-flex align-items-center gap-1"><svg class="ic sm"><use href="#dn"/></svg>设置<span class="ms-auto fade2">::::</span></div>
              <div class="pr d-flex align-items-center" style="margin-top:3px"><label for="pi2">通道编号</label><input id="pi2" class="num" value="0"></div>
              <div class="pr d-flex align-items-center" style="margin-top:20px"><span class="lb" style="width:67px">背面剔除</span><label class="d-flex align-items-center gap-1"><input type="checkbox" class="ck">摄像机</label></div></div>
          </div>
        </div>
      </div>
    </div>
  </div>
  <footer class="stat d-flex align-items-center gap-1"><svg class="ic"><use href="#mo"/></svg>平移<svg class="ic"><use href="#mo"/></svg>选项<svg class="ic ms-auto"><use href="#wo"/></svg>| 5.0.1</footer>
</section>

<div class="wm d-flex align-items-center"><svg width="41" height="34" viewBox="0 0 41 34" class="me-2" fill="#b4b4b4"><path d="M16 0C7 0 0 6 0 13c0 4 2 7 5 9l-1 5 5-3c3 1 6 1 8 1-3-9 5-15 14-15C30 4 24 0 16 0z"/><path d="M29 11c-7 0-12 5-12 10.500S22 32 29 32c2 0 3 0 5-1l4 2-1-4c2-2 4-4 4-7.500C41 16 36 11 29 11z" stroke="#383838"/><g fill="#333"><circle cx="11" cy="9" r="2"/><circle cx="21" cy="9" r="2"/><circle cx="25" cy="19" r="1.700"/><circle cx="33" cy="19" r="1.700"/></g></svg>公众号 · 柳杉前端</div>
<div class="wm2">掘金技术社区 @ 柳杉</div>
<div class="tip text-nowrap">使用预览范围<br>为动画回放和视图渲染使用替代的开始/结束帧范围.</div>

<!-- Export dialog -->
<section class="dlg d-flex flex-column" role="dialog" aria-label="Blender 文件视图">
  <div class="ttl d-flex align-items-center"><div class="d-flex" style="gap:4px;width:60px"><i style="background:#f6564e"></i><i style="background:#4a4a4a"></i><i style="background:#1fb84c"></i></div><span class="mx-auto">Blender 文件视图</span><span style="width:60px"></span></div>
  <div class="d-flex flex-grow-1" style="min-height:0">
    <div class="lside flex-shrink-0">
      <div class="lp"><div class="h d-flex align-items-center"><svg class="ic sm"><use href="#dn"/></svg>书签<span class="ms-auto fade2">::::</span></div><button class="w-100 d-flex align-items-center ps-1" style="background:#424242;height:11px;margin-top:4px;border-radius:2px"><svg class="ic sm"><use href="#pl"/></svg><span class="mx-auto">添加书签</span></button></div>
      <div class="lp"><div class="h d-flex align-items-center"><svg class="ic sm"><use href="#dn"/></svg>系统<span class="ms-auto fade2">::::</span></div>
        <div class="lst" style="margin-top:4px"><a href="#" class="d-flex align-items-center"><svg class="ic"><use href="#ff"/></svg>应用</a><a href="#" class="on d-flex align-items-center"><svg class="ic"><use href="#dk"/></svg>桌面</a><a href="#" class="d-flex align-items-center"><svg class="ic"><use href="#dc"/></svg>文档</a><a href="#" class="d-flex align-items-center"><svg class="ic"><use href="#dl"/></svg>下载</a><div class="ft d-flex justify-content-between"><svg class="ic sm"><use href="#pp"/></svg>::::</div></div></div>
      <div class="lp"><div class="h d-flex align-items-center" style="height:16px"><svg class="ic sm"><use href="#dn"/></svg>卷标<span class="ms-auto fade2">::::</span></div>
        <div class="lst" style="margin-top:4px"><a href="#" class="d-flex align-items-center"><svg class="ic"><use href="#hd"/></svg>Macintosh HD</a><div class="ft d-flex justify-content-between"><svg class="ic sm"><use href="#pp"/></svg>::::</div></div></div>
      <div class="lp"><div class="h d-flex align-items-center" style="height:16px"><svg class="ic sm"><use href="#dn"/></svg>最近打开的<span class="ms-auto fade2">::::</span></div>
        <div class="d-flex gap-2" style="margin-top:4px"><div class="lst flex-grow-1"><a href="#" class="on d-flex align-items-center"><svg class="ic"><use href="#dk"/></svg>桌面</a><div class="ft d-flex justify-content-between"><svg class="ic sm"><use href="#pp"/></svg>::::</div></div><button class="box" style="height:11px;padding:2px" aria-label="更多"><svg class="ic sm"><use href="#dn"/></svg></button></div></div>
    </div>
    <div class="flex-grow-1 d-flex flex-column" style="padding-left:8px;min-width:0">
      <div class="d-flex align-items-center" style="height:24px">
        <div class="grp d-flex"><button class="d-flex align-items-center justify-content-center" aria-label="后退"><svg class="ic"><use href="#al"/></svg></button><button class="d-flex align-items-center justify-content-center" aria-label="前进"><svg class="ic"><use href="#ar"/></svg></button><button class="d-flex align-items-center justify-content-center" aria-label="上级"><svg class="ic"><use href="#up"/></svg></button><button class="d-flex align-items-center justify-content-center me-1" aria-label="刷新"><svg class="ic"><use href="#rf"/></svg></button><button class="d-flex align-items-center justify-content-center" aria-label="新建文件夹"><svg class="ic"><use href="#nf"/></svg></button></div>
        <input class="box px-1" style="height:14px;width:178px;margin:0 5px" value="/Users/liushan/Desktop/" aria-label="路径">
        <div class="box d-flex align-items-center gap-1 px-1" style="height:14px;width:72px"><svg class="ic"><use href="#se"/></svg><input class="w-100" placeholder="搜索" aria-label="搜索"></div>
        <div class="grp d-flex ms-auto"><button class="on d-flex align-items-center justify-content-center" aria-label="列表"><svg class="ic"><use href="#li"/></svg></button><button class="d-flex align-items-center justify-content-center" aria-label="详情"><svg class="ic" viewBox="0 0 16 16"><path d="M1 3h3M1 8h3M1 13h3M6 3h3v4H6zM12 2h3v4h-3z"/></svg></button><button class="d-flex align-items-center justify-content-center" aria-label="缩略图"><svg class="ic"><use href="#g4"/></svg></button></div>
        <svg class="ic sm mx-1"><use href="#dn"/></svg><div class="grp d-flex ms-1"><button class="on d-flex align-items-center justify-content-center" aria-label="筛选"><svg class="ic"><use href="#fi"/></svg></button></div><svg class="ic sm mx-1"><use href="#dn"/></svg><div class="grp ms-2"><button class="on d-flex align-items-center justify-content-center rounded-1" aria-label="设置"><svg class="ic"><use href="#ge"/></svg></button></div>
      </div>
      <div class="d-flex flex-grow-1" style="min-height:0">
        <div style="width:207px;background:#242424;margin-right:1px" class="flex-shrink-0">
          <div class="d-flex align-items-center" style="height:13px;background:#292929"><span style="width:123px">名称</span><span class="fade2" style="width:15px">▾</span><span style="width:39px">日期</span><span>尺寸</span></div>
          <table class="files"><tbody>
            <tr><td style="width:138px"><span class="d-flex align-items-center" style="gap:2px"><svg class="ic fold"><use href="#ff"/></svg>code</span></td><td style="width:40px">12/03/26</td><td></td></tr>
            <tr><td><span class="d-flex align-items-center" style="gap:2px"><svg class="ic fold"><use href="#ff"/></svg>其他</span></td><td>13/03/26</td><td></td></tr>
            <tr><td><span class="d-flex align-items-center" style="gap:2px"><svg class="ic fold"><use href="#ff"/></svg>压缩包</span></td><td>13/03/26</td><td></td></tr>
            <tr><td><span class="d-flex align-items-center" style="gap:2px"><svg class="ic fold"><use href="#ff"/></svg>图片</span></td><td>22/03/26</td><td></td></tr>
            <tr><td><span class="d-flex align-items-center" style="gap:2px"><svg class="ic fold"><use href="#ff"/></svg>文档</span></td><td>13/03/26</td><td></td></tr>
            <tr><td><span class="d-flex align-items-center" style="gap:2px"><svg class="ic fold"><use href="#ff"/></svg>模型</span></td><td>15/02/26</td><td></td></tr>
            <tr><td><span class="d-flex align-items-center text-nowrap" style="gap:2px"><svg class="ic fold"><use href="#ff"/></svg>精选10套开源数据可视化大屏项目合集</span></td><td>13/03/26</td><td></td></tr>
            <tr><td><span class="d-flex align-items-center" style="gap:2px"><svg class="ic fold"><use href="#ff"/></svg>表格</span></td><td>13/03/26</td><td></td></tr>
            <tr><td><span class="d-flex align-items-center" style="gap:2px"><svg class="ic fold"><use href="#ff"/></svg>视频</span></td><td>22/03/26</td><td></td></tr>
            <tr><td><span class="d-flex align-items-center" style="gap:2px"><svg class="ic fold"><use href="#ff"/></svg>设计稿</span></td><td>20/03/26</td><td></td></tr>
            <tr><td><span class="d-flex align-items-center" style="gap:2px"><svg class="ic fold"><use href="#ff"/></svg>隧道</span></td><td>15/02/26</td><td></td></tr>
            <tr><td><span class="d-flex align-items-center" style="gap:2px"><svg class="ic"><use href="#cu"/></svg>未命名.glb</span></td><td>30/03/26</td><td class="text-end" style="padding-right:14px">4K</td></tr>
          </tbody></table>
        </div>
        <div class="opt flex-grow-1 overflow-hidden" style="border-left:2px solid #686a28;padding-top:1px;height:290px;background:#242424">
          <div class="ho d-flex align-items-center"><svg class="ic sm"><use href="#rt"/></svg>场景结构</div>
          <div class="ho d-flex align-items-center"><svg class="ic sm"><use href="#rt"/></svg>网格</div>
          <div class="ho d-flex align-items-center"><svg class="ic sm"><use href="#dn"/></svg>材质</div>
          <div class="pr d-flex align-items-center" style="margin-top:1px"><label for="s1">材质</label><select id="s1" class="sel"><option>导出</option></select></div>
          <div class="pr d-flex align-items-center"><label for="s2">图像</label><select id="s2" class="sel"><option>自动</option></select></div>
          <div class="pr d-flex align-items-center" style="height:12px"><label for="q1">图像品质</label><input id="q1" class="num" value="75"></div>
          <label class="ind d-flex align-items-center" style="margin-top:1px"><input type="checkbox" class="ck">创建WebP</label>
          <label class="ind d-flex align-items-center"><input type="checkbox" class="ck">WebP回退</label>
          <div class="ho d-flex align-items-center"><svg class="ic sm"><use href="#rt"/></svg>未使用的纹理和图像</div>
          <div class="ho d-flex align-items-center" style="margin-top:2px"><svg class="ic sm"><use href="#dn"/></svg><label class="d-flex align-items-center gap-1"><input type="checkbox" class="ck" checked>形态键</label></div>
          <label class="ind d-flex align-items-center" style="margin-top:3px"><input type="checkbox" class="ck" checked>形态键法向</label>
          <label class="ind d-flex align-items-center"><input type="checkbox" class="ck">形态键切向</label>
          <div class="ho d-flex align-items-center"><svg class="ic sm"><use href="#rt"/></svg>优化形态键</div>
          <div class="ho d-flex align-items-center" style="margin-top:2px"><svg class="ic sm"><use href="#rt"/></svg>骨架</div>
          <div class="ho d-flex align-items-center"><svg class="ic sm"><use href="#rt"/></svg><label class="d-flex align-items-center gap-1"><input type="checkbox" class="ck" checked>蒙皮</label></div>
          <div class="ho d-flex align-items-center"><svg class="ic sm"><use href="#rt"/></svg>光照</div>
          <div class="ho d-flex align-items-center"><svg class="ic sm"><use href="#dn"/></svg><label class="d-flex align-items-center gap-1"><input type="checkbox" class="ck" checked>压缩</label></div>
          <div class="pr d-flex align-items-center" style="margin-top:1px"><label for="q2">压缩级别</label><input id="q2" class="num" value="6"></div>
          <div class="pr d-flex align-items-center"><label for="q3">量化位置</label><input id="q3" class="num" value="14"></div>
          <div class="pr d-flex align-items-center" style="height:11px"><label for="q4">法向</label><input id="q4" class="num" value="10"></div>
          <div class="pr d-flex align-items-center" style="height:11px"><label for="q5">纹理坐标</label><input id="q5" class="num" value="12"></div>
        </div>
      </div>
      <div class="d-flex mt-auto" style="height:14px;gap:5px"><div class="d-flex align-items-center px-1" style="width:299px;background:#790f14"><input class="flex-grow-1" value="未命名.glb" aria-label="文件名" style="color:#eee"><button aria-label="减少"><svg class="ic sm me-2"><use href="#mn"/></svg></button><button aria-label="增加"><svg class="ic sm"><use href="#pl"/></svg></button></div><button class="flex-fill rounded-1" style="background:#484848;flex-basis:0">取消</button><button class="on flex-fill rounded-1" style="flex-basis:0">导出 glTF 2.0</button></div>
    </div>
  </div>
</section>
<div class="ring"></div>
</main>
<script src="https://cdn.jsdelivr.net/npm/bootstrap@5.3.0/dist/js/bootstrap.bundle.min.js"></script>
</body>
</html>
